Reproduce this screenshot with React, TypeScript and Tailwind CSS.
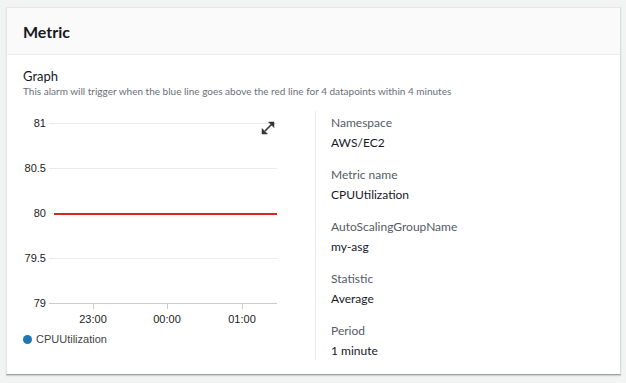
import React from 'react';

const FIELDS: [string, string][] = [
  ['Namespace', 'AWS/EC2'],
  ['Metric name', 'CPUUtilization'],
  ['AutoScalingGroupName', 'my-asg'],
  ['Statistic', 'Average'],
  ['Period', '1 minute'],
];

const Y_TICKS: [string, number][] = [['81', 13], ['80.5', 58], ['80', 103], ['79.5', 148], ['79', 193]];
const X_TICKS: [string, number][] = [['23:00', 70], ['00:00', 144], ['01:00', 219]];

function Chart() {
  return (
    <svg width={277} height={217} className="block" style={{ fontFamily: '"Liberation Sans", Arial, sans-serif' }}>
      {Y_TICKS.map(([label, y]) => (
        <g key={label}>
          <line x1={26} x2={254} y1={y - 0.5} y2={y - 0.5} stroke={y === 193 ? '#cccccc' : '#e9ebed'} strokeWidth={1} />
          <text x={23} y={y + 3} fontSize={11} fill="#222" textAnchor="end">{label}</text>
        </g>
      ))}
      {X_TICKS.map(([label, x]) => (
        <g key={label}>
          <line x1={x + 0.5} x2={x + 0.5} y1={193} y2={198} stroke="#cccccc" />
          <text x={x} y={212} fontSize={11} fill="#222" textAnchor="middle">{label}</text>
        </g>
      ))}
      <line x1={31} x2={254} y1={103} y2={103} stroke="#d62728" strokeWidth={2} />
      {/* expand icon */}
      <g stroke="#333" strokeWidth={1.6} fill="#333">
        <line x1={242} y1={20} x2={249} y2={13} />
        <polygon points="251,11 251,16.5 245.5,11" strokeWidth={0.5} />
        <polygon points="239,23 239,17.5 244.5,23" strokeWidth={0.5} />
      </g>
    </svg>
  );
}

export default function App() {
  return (
    <div className="min-h-screen bg-[#f2f3f3] pt-[7px] pl-[6px] pr-[5px]" style={{ fontFamily: 'Lato, "Noto Sans", Arial, sans-serif' }}>
      <div className="bg-white border border-[#e4e7e7] border-b-[#9aa5a6] border-r-[#d5dbdb] h-[368px] shadow-[0_1px_1px_0_rgba(0,28,36,0.15)]">
        <div className="h-[47px] bg-[#fafafa] border-b border-[#eaeded] px-4 flex items-center">
          <h2 className="text-[16px] font-bold text-[#16191f] pt-[1px]">Metric</h2>
        </div>
        <div className="px-4 pt-[13px]">
          <div className="text-[13px] leading-[16px] text-[#16191f]">Graph</div>
          <div className="text-[10px] leading-[12px] text-[#687078] mt-[1px]">
            This alarm will trigger when the blue line goes above the red line for 4 datapoints within 4 minutes
          </div>
          <div className="flex mt-[14px] items-start">
            <div className="w-[292px] shrink-0">
              <Chart />
              <div className="flex items-center gap-[4px] mt-[3px]" style={{ fontFamily: '"Liberation Sans", Arial, sans-serif' }}>
                <span className="w-[9px] h-[9px] rounded-full bg-[#1f77b4]" />
                <span className="text-[11px] text-[#444]">CPUUtilization</span>
              </div>
            </div>
            <div className="border-l border-[#e9ebed] pl-[15px] pt-[4px] pb-[1px] flex flex-col gap-[16px]">
              {FIELDS.map(([label, value]) => (
                <div key={label} className="flex flex-col gap-[4px]">
                  <div className="text-[12px] leading-[16px] text-[#545b64]">{label}</div>
                  <div className="text-[12px] leading-[16px] text-[#16191f]">{value}</div>
                </div>
              ))}
            </div>
          </div>
        </div>
      </div>
    </div>
  );
}
